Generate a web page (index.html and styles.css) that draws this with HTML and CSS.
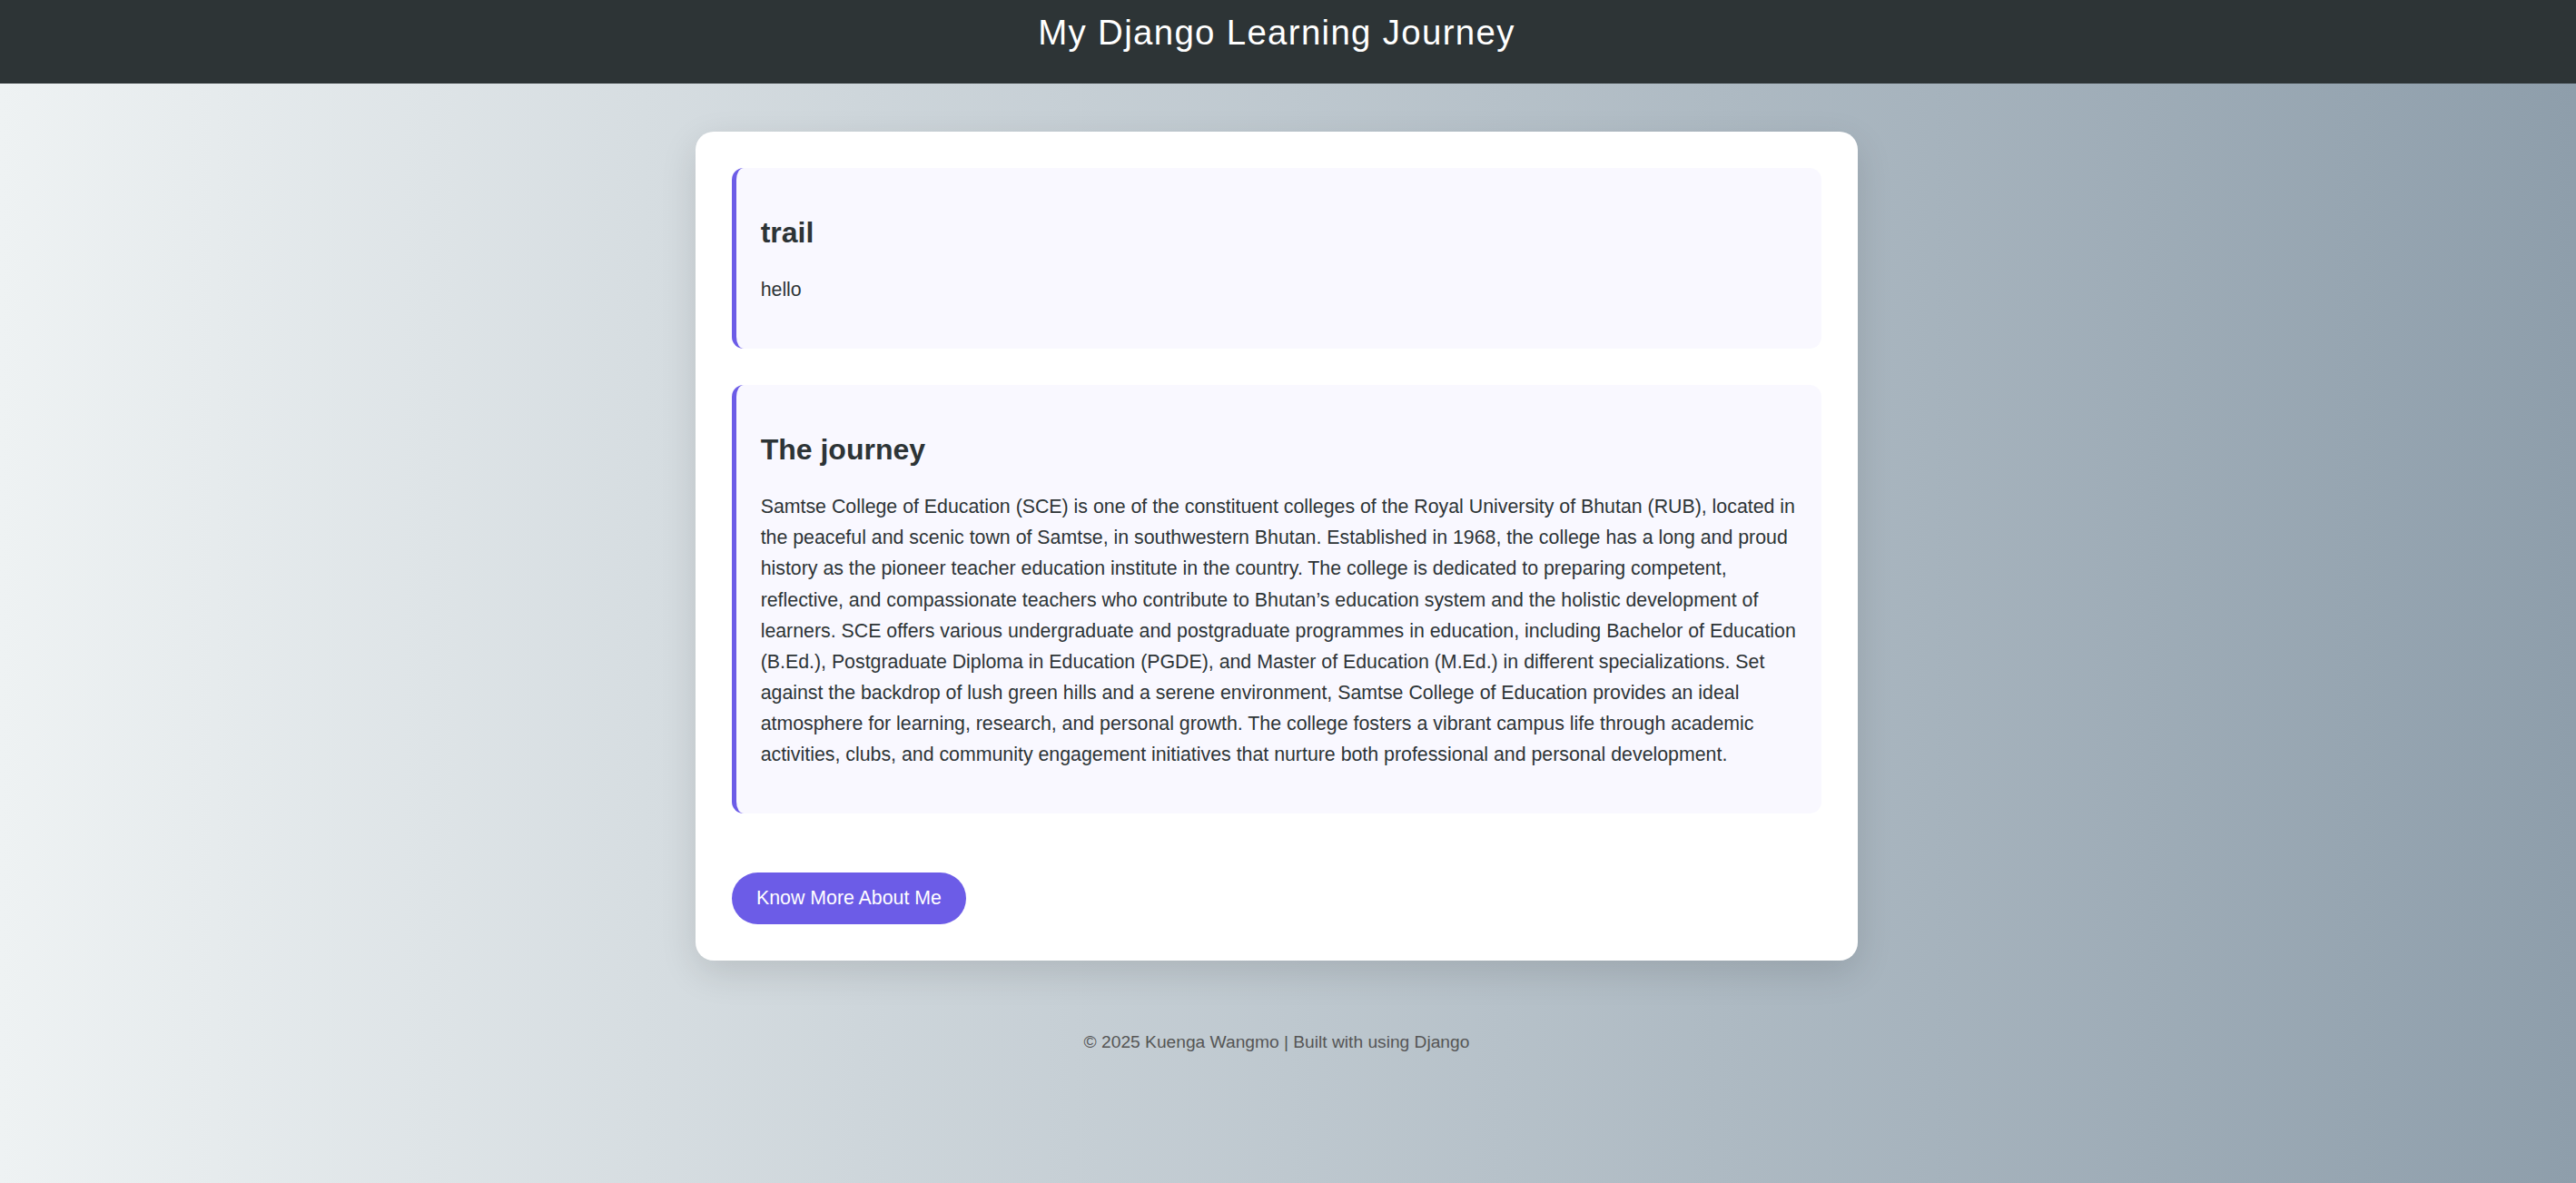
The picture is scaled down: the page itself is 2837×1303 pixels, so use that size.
FILE: index.html
```html
<!DOCTYPE html>
<html lang="en">
<head>
<meta charset="utf-8">
<title>My Django Learning Journey</title>
<link rel="stylesheet" href="styles.css">
</head>
<body>
<header class="site-header">
  <h1 class="site-title">My Django Learning Journey</h1>
</header>
<div class="page">
  <main class="card">
    <article class="entry">
      <h2 class="entry-title">trail</h2>
      <p class="entry-text">hello</p>
    </article>
    <article class="entry">
      <h2 class="entry-title">The journey</h2>
      <p class="entry-text">Samtse College of Education (SCE) is one of the constituent colleges of the Royal University of Bhutan (RUB), located in the peaceful and scenic town of Samtse, in southwestern Bhutan. Established in 1968, the college has a long and proud history as the pioneer teacher education institute in the country. The college is dedicated to preparing competent, reflective, and compassionate teachers who contribute to Bhutan’s education system and the holistic development of learners. SCE offers various undergraduate and postgraduate programmes in education, including Bachelor of Education (B.Ed.), Postgraduate Diploma in Education (PGDE), and Master of Education (M.Ed.) in different specializations. Set against the backdrop of lush green hills and a serene environment, Samtse College of Education provides an ideal atmosphere for learning, research, and personal growth. The college fosters a vibrant campus life through academic activities, clubs, and community engagement initiatives that nurture both professional and personal development.</p>
    </article>
    <div class="actions">
      <a class="btn" href="#">Know More About Me</a>
    </div>
  </main>
  <footer class="site-footer">© 2025 Kuenga Wangmo | Built with using Django</footer>
</div>
</body>
</html>
```

FILE: styles.css
```css
* { box-sizing: border-box; }

html, body {
  margin: 0;
  padding: 0;
}

body {
  min-height: 100vh;
  font-family: "Liberation Sans", Arial, sans-serif;
  font-size: 21.33px;
  line-height: 1.6;
  color: #2d3436;
  background: linear-gradient(to right, #eef2f3, #8e9eab);
}

.site-header {
  height: 92px;
  background: #2d3436;
  padding: 14px 25px 0 0;
  text-align: center;
}

.site-title {
  margin: 0;
  font-size: 38.4px;
  font-weight: normal;
  line-height: normal;
  letter-spacing: 1.33px;
  color: #ffffff;
}

.page {
  padding: 53px 25px 0 0;
  display: flex;
  flex-direction: column;
  align-items: center;
}

.card {
  width: 1280px;
  background: #ffffff;
  border-radius: 20px;
  padding: 40px;
  box-shadow: 0 13px 40px rgba(0, 0, 0, 0.12);
}

.entry {
  background: #f9f8ff;
  border-left: 5.33px solid #6c5ce7;
  border-radius: 13px;
  padding: 26.67px;
  margin-bottom: 40px;
}

.entry-title {
  margin: 25.5px 0 26.5px;
  font-size: 32px;
  line-height: 1.2;
  font-weight: bold;
  color: #2d3436;
}

.entry-text {
  margin: 0 0 21.33px;
  line-height: 34.13px;
  color: #2d3436;
}

.actions {
  padding-top: 25px;
  display: flex;
}

.btn {
  display: inline-block;
  background: #6c5ce7;
  color: #ffffff;
  text-decoration: none;
  font-size: 21.33px;
  line-height: normal;
  padding: 16px 27px;
  border-radius: 40px;
}

.site-footer {
  margin-top: 75px;
  font-size: 19.2px;
  color: #555555;
  text-align: center;
}
```
